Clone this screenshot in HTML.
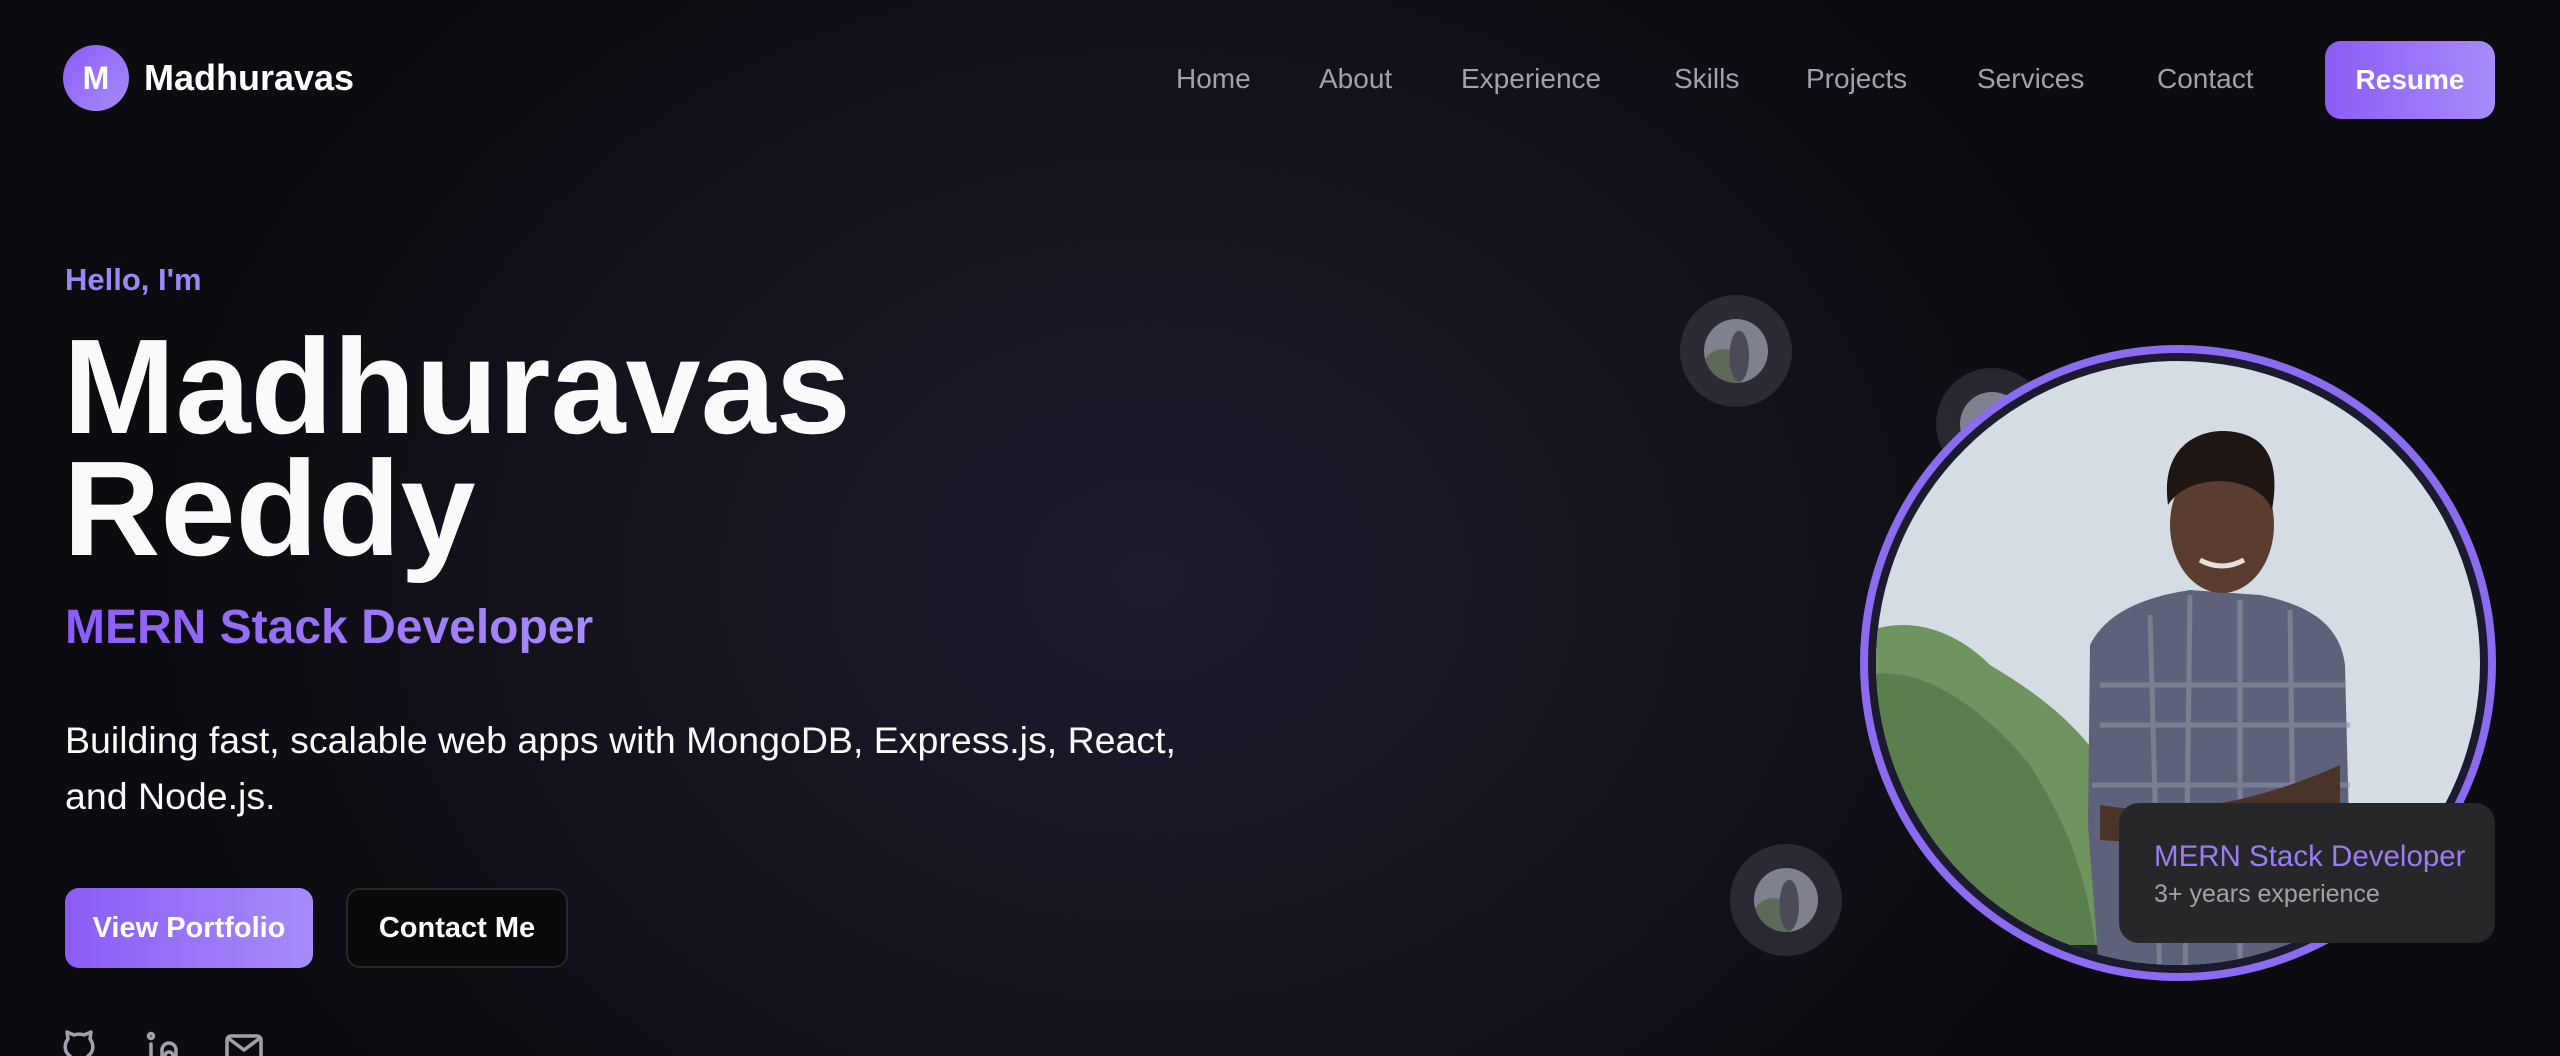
<!DOCTYPE html>
<html><head><meta charset="utf-8">
<style>
*{margin:0;padding:0;box-sizing:border-box}
html,body{width:2560px;height:1056px;overflow:hidden}
body{font-family:"Liberation Sans",sans-serif;position:relative;
background:radial-gradient(ellipse 1000px 800px at 1150px 580px,#1f1a30 0%,#17141f 45%,#0c0b10 100%);color:#fff}
.abs{position:absolute;white-space:nowrap}
.logo{left:63px;top:45px;width:66px;height:66px;border-radius:50%;background:linear-gradient(135deg,#8b5cf6,#a78bfa);font-weight:bold;font-size:32px;line-height:66px;text-align:center}
.brand{left:144px;top:56px;font-size:36px;font-weight:bold;line-height:44px}
.nav{top:61px;font-size:28px;color:#a1a1aa;line-height:36px}
.resume{left:2325px;top:41px;width:170px;height:78px;border-radius:16px;background:linear-gradient(90deg,#8b5cf6,#a78bfa);font-size:28px;font-weight:bold;line-height:78px;text-align:center}
.hello{left:65px;top:262px;font-size:31px;font-weight:bold;color:#9b87f5}
.name{left:63px;font-size:135px;font-weight:bold;letter-spacing:0;line-height:127px;color:#fafafa}
.role{left:65px;top:600px;font-size:48px;font-weight:bold;background:linear-gradient(90deg,#8b5cf6,#a78bfa);-webkit-background-clip:text;color:transparent}
.desc{left:65px;top:712px;font-size:37.5px;line-height:56px;color:#fafafa}
.btn{top:888px;height:80px;border-radius:14px;font-size:29px;font-weight:bold;line-height:80px;text-align:center}
.b1{left:65px;width:248px;background:linear-gradient(90deg,#8b5cf6,#a78bfa)}
.b2{left:346px;width:222px;background:#09090b;border:2px solid #27272a;line-height:76px}
.bubble{width:112px;height:112px;border-radius:50%;background:rgba(120,118,135,.25)}
.bubble i{position:absolute;left:24px;top:24px;width:64px;height:64px;border-radius:50%;background:radial-gradient(ellipse 10px 26px at 55% 58%,#4b4a58 0 95%,transparent 100%),radial-gradient(circle at 30% 80%,#5d6a5a 0 30%,transparent 32%),#7e818e}
.badge{left:2119px;top:803px;width:376px;height:140px;border-radius:20px;background:#27272a}
</style></head><body>
<div class="abs logo">M</div>
<div class="abs brand">Madhuravas</div>
<div class="abs nav" style="left:1176px">Home</div>
<div class="abs nav" style="left:1319px">About</div>
<div class="abs nav" style="left:1461px">Experience</div>
<div class="abs nav" style="left:1674px">Skills</div>
<div class="abs nav" style="left:1806px">Projects</div>
<div class="abs nav" style="left:1977px">Services</div>
<div class="abs nav" style="left:2157px">Contact</div>
<div class="abs resume">Resume</div>

<div class="abs hello">Hello, I'm</div>
<div class="abs name" style="top:323px">Madhuravas</div>
<div class="abs name" style="top:445px">Reddy</div>
<div class="abs role">MERN Stack Developer</div>
<div class="abs desc">Building fast, scalable web apps with MongoDB, Express.js, React,<br>and Node.js.</div>
<div class="abs btn b1">View Portfolio</div>
<div class="abs btn b2">Contact Me</div>

<svg class="abs" style="left:60px;top:1030px" width="220" height="30" fill="none" stroke="#a1a1aa" stroke-width="3.5" stroke-linecap="round" stroke-linejoin="round">
<path d="M10 26 C4 22 4 14 8 9 L7 2 L14 5 C17 4 21 4 24 5 L31 2 L30 9 C34 14 34 22 28 26"/>
<circle cx="91" cy="6" r="2.5"/><path d="M91 14 V30"/><path d="M102 30 V20 a7 7 0 0 1 14 0 V30"/><circle cx="109" cy="26" r="4"/>
<rect x="167" y="6" width="34" height="26" rx="4"/><path d="M168 8 L184 20 L200 8"/>
</svg>

<div class="abs bubble" style="left:1680px;top:295px"><i></i></div>
<div class="abs bubble" style="left:1936px;top:368px"><i></i></div>
<div class="abs bubble" style="left:1730px;top:844px"><i></i></div>

<svg class="abs" style="left:1860px;top:345px" width="640" height="640" viewBox="0 0 640 640">
<defs><clipPath id="c"><circle cx="318" cy="318" r="302"/></clipPath></defs>
<circle cx="318" cy="318" r="314" fill="#1b1a2e" stroke="#8b6cf0" stroke-width="8"/>
<g clip-path="url(#c)">
<rect width="640" height="640" fill="#d3dde3"/>
<path d="M0 290 C40 270 90 280 130 320 C180 350 220 380 250 430 L260 640 L0 640Z" fill="#6f9460"/>
<path d="M10 330 C60 320 120 360 170 420 C200 470 230 520 240 640 L0 640Z" fill="#5a7e4c"/>
<path d="M50 600 h200 v10 h-200z" fill="#222"/>
<path d="M230 300 C250 260 300 250 330 245 L400 250 C450 260 480 280 485 320 L490 520 L480 640 L240 640 L228 480Z" fill="#5d627a"/>
<path d="M290 270 l10 370 M330 250 l-5 390 M380 255 l0 385 M430 265 l5 375 M240 380 l250 0 M232 440 l258 0 M240 340 l245 0" stroke="#8d91a3" stroke-width="5" opacity=".6"/>
<path d="M240 460 C300 470 380 465 480 420 L480 470 C400 500 300 500 240 495Z" fill="#4a3328"/>
<ellipse cx="362" cy="180" rx="52" ry="68" fill="#5a3d2e"/>
<path d="M308 160 C300 100 340 85 365 86 C410 88 420 120 412 165 C400 130 330 125 308 160Z" fill="#1d1613"/>
<path d="M340 215 q22 12 44 0" stroke="#e8e0d8" stroke-width="5" fill="none"/>
</g>
</svg>

<div class="abs badge"></div>
<div class="abs" style="left:2154px;top:840px;font-size:29.5px;color:#9b7cf3">MERN Stack Developer</div>
<div class="abs" style="left:2154px;top:880px;font-size:25px;color:#a1a1aa">3+ years experience</div>
</body></html>
